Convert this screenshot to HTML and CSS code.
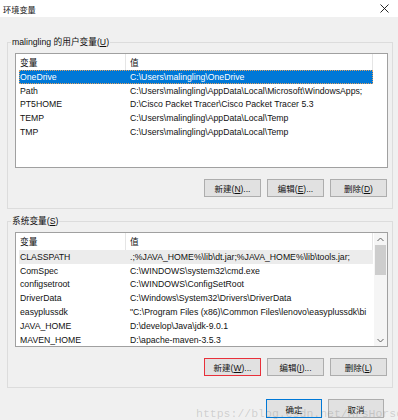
FILE: index.html
```html
<!DOCTYPE html>
<html>
<head>
  <title>环境变量</title>
  <link rel="stylesheet" href="styles.css">
</head>
<body>
  <div class="titlebar">
    <span class="title">环境变量</span>
    <svg class="close" width="9" height="9" viewBox="0 0 9 9">
      <path d="M0.5 0.5 L8.5 8.5 M8.5 0.5 L0.5 8.5" stroke="#111" stroke-width="0.9" fill="none"/>
    </svg>
  </div>

  <div class="content">
    <fieldset class="group">
      <legend>malingling 的用户变量(<u>U</u>)</legend>
      <div class="list user-list">
        <div class="head">
          <div class="hcell c1">变量</div>
          <div class="hcell c2">值</div>
        </div>
        <div class="row selected"><div class="c1">OneDrive</div><div class="c2">C:\Users\malingling\OneDrive</div></div>
        <div class="row"><div class="c1">Path</div><div class="c2">C:\Users\malingling\AppData\Local\Microsoft\WindowsApps;</div></div>
        <div class="row"><div class="c1">PT5HOME</div><div class="c2">D:\Cisco Packet Tracer\Cisco Packet Tracer 5.3</div></div>
        <div class="row"><div class="c1">TEMP</div><div class="c2">C:\Users\malingling\AppData\Local\Temp</div></div>
        <div class="row"><div class="c1">TMP</div><div class="c2">C:\Users\malingling\AppData\Local\Temp</div></div>
      </div>
      <div class="buttons">
        <button>新建(<u>N</u>)...</button>
        <button>编辑(<u>E</u>)...</button>
        <button>删除(<u>D</u>)</button>
      </div>
    </fieldset>

    <fieldset class="group sys">
      <legend>系统变量(<u>S</u>)</legend>
      <div class="list sys-list">
        <div class="rows">
          <div class="head">
            <div class="hcell c1">变量</div>
            <div class="hcell c2">值</div>
          </div>
          <div class="row hover"><div class="c1">CLASSPATH</div><div class="c2">.;%JAVA_HOME%\lib\dt.jar;%JAVA_HOME%\lib\tools.jar;</div></div>
          <div class="row"><div class="c1">ComSpec</div><div class="c2">C:\WINDOWS\system32\cmd.exe</div></div>
          <div class="row"><div class="c1">configsetroot</div><div class="c2">C:\WINDOWS\ConfigSetRoot</div></div>
          <div class="row"><div class="c1">DriverData</div><div class="c2">C:\Windows\System32\Drivers\DriverData</div></div>
          <div class="row"><div class="c1">easyplussdk</div><div class="c2">"C:\Program Files (x86)\Common Files\lenovo\easyplussdk\bi</div></div>
          <div class="row"><div class="c1">JAVA_HOME</div><div class="c2">D:\develop\Java\jdk-9.0.1</div></div>
          <div class="row"><div class="c1">MAVEN_HOME</div><div class="c2">D:\apache-maven-3.5.3</div></div>
        </div>
        <div class="scrollbar">
          <svg class="arrow" width="7" height="5" viewBox="0 0 7 5"><path d="M0.5 4 L3.5 1 L6.5 4" stroke="#606060" fill="none"/></svg>
          <div class="track"><div class="thumb"></div></div>
          <svg class="arrow" width="7" height="5" viewBox="0 0 7 5"><path d="M0.5 1 L3.5 4 L6.5 1" stroke="#606060" fill="none"/></svg>
        </div>
      </div>
      <div class="buttons">
        <button class="marked">新建(<u>W</u>)...</button>
        <button>编辑(<u>I</u>)...</button>
        <button>删除(<u>L</u>)</button>
      </div>
    </fieldset>

    <div class="footer">
      <button class="default">确定</button>
      <button>取消</button>
    </div>
  </div>

  <div class="watermark">https://blog.csdn.net/MrsHorse</div>
</body>
</html>
```

FILE: styles.css
```css
* {
  box-sizing: border-box;
}
body {
  margin: 0;
  width: 398px;
  height: 420px;
  overflow: hidden;
  position: relative;
  background-color: #f0f0f0;
  font-family: "Liberation Sans", "Noto Sans CJK SC", sans-serif;
  font-size: 8.7px;
  color: #111;
}
.titlebar {
  height: 17px;
  background-color: #fff;
  display: flex;
  align-items: center;
  justify-content: space-between;
  padding: 0 9px 0 3px;
}
.title {
  font-size: 8.2px;
}
.content {
  padding: 19px 5px 0 7px;
}
.group {
  margin: 0;
  padding: 0 4px 11px 7px;
  border: 1px solid #dcdcdc;
}
.group.sys {
  margin-top: 6px;
}
.group legend {
  padding: 0 1px;
  margin-left: -4px;
  line-height: 12px;
  height: 12px;
}
.list {
  margin-top: 5px;
  height: 115px;
  border: 1px solid #a0a0a0;
  background-color: #fff;
  overflow: hidden;
}
.sys-list {
  display: flex;
}
.sys-list .rows {
  flex: 1;
  overflow: hidden;
}
.head {
  display: flex;
  height: 16px;
  align-items: stretch;
}
.sys-list .head {
  height: 17px;
}
.hcell {
  display: flex;
  align-items: center;
  padding-left: 4px;
  border-right: 1px solid #e5e5e5;
}
.hcell.c1 {
  width: 110px;
}
.hcell.c2 {
  width: 247px;
}
.row {
  display: flex;
  align-items: center;
  height: 13.8px;
  margin-left: 3px;
  width: 354px;
  white-space: nowrap;
}
.row .c1 {
  width: 107px;
  padding-left: 1px;
}
.row .c2 {
  flex: 1;
  padding-left: 4px;
  overflow: hidden;
}
.row.selected {
  background-color: #0078d7;
  color: #fff;
  outline: 1px dotted #e0a060;
  outline-offset: -1px;
}
.row.hover {
  background-color: #ececec;
}
.scrollbar {
  width: 13px;
  background-color: #f5f5f5;
  display: flex;
  flex-direction: column;
  align-items: center;
  padding: 4px 0 3px;
}
.arrow {
  flex: none;
}
.track {
  flex: 1;
  width: 100%;
  padding: 3px 1px 0;
}
.thumb {
  height: 30px;
  background-color: #cdcdcd;
}
.buttons {
  display: flex;
  justify-content: flex-end;
  gap: 6px;
  margin-top: 11px;
  padding-right: 1px;
}
button {
  width: 57px;
  height: 18px;
  padding: 0;
  font-family: "Liberation Sans", "Noto Sans CJK SC", sans-serif;
  font-size: 8.5px;
  color: #111;
  background-color: #e1e1e1;
  border: 1px solid #adadad;
}
button.marked {
  border-color: #e8303a;
}
.footer {
  display: flex;
  justify-content: flex-end;
  gap: 6px;
  margin-top: 11px;
  padding-right: 9px;
}
.footer button {
  width: 56px;
  height: 19px;
}
button.default {
  border-color: #0078d7;
}
.watermark {
  position: absolute;
  left: 196px;
  top: 407px;
  font-family: "Liberation Mono", monospace;
  font-size: 11.5px;
  color: rgba(120, 120, 120, 0.28);
  white-space: nowrap;
}
```
